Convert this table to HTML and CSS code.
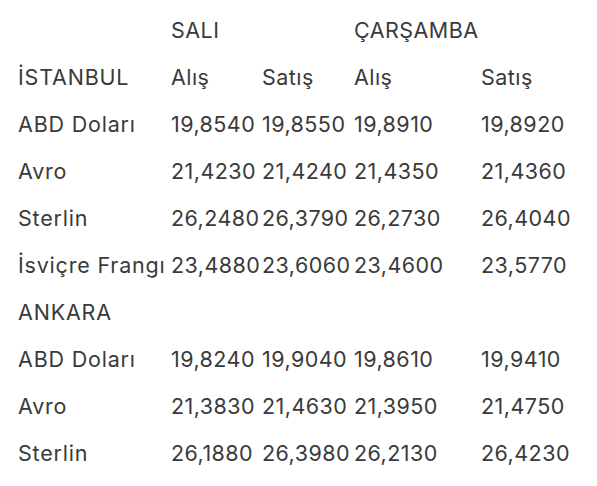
FILE: index.html
```html
<!DOCTYPE html>
<html lang="tr">
<head>
<meta charset="utf-8">
<link rel="stylesheet" href="styles.css">
</head>
<body>
<table class="rates">
  <colgroup>
    <col class="c-name"><col class="c-a"><col class="c-b"><col class="c-c"><col class="c-d">
  </colgroup>
  <tbody>
    <tr><td></td><td>SALI</td><td></td><td>ÇARŞAMBA</td><td></td></tr>
    <tr><td>İSTANBUL</td><td>Alış</td><td>Satış</td><td>Alış</td><td>Satış</td></tr>
    <tr><td>ABD Doları</td><td>19,8540</td><td>19,8550</td><td>19,8910</td><td>19,8920</td></tr>
    <tr><td>Avro</td><td>21,4230</td><td>21,4240</td><td>21,4350</td><td>21,4360</td></tr>
    <tr><td>Sterlin</td><td>26,2480</td><td>26,3790</td><td>26,2730</td><td>26,4040</td></tr>
    <tr><td>İsviçre Frangı</td><td>23,4880</td><td>23,6060</td><td>23,4600</td><td>23,5770</td></tr>
    <tr><td>ANKARA</td><td></td><td></td><td></td><td></td></tr>
    <tr><td>ABD Doları</td><td>19,8240</td><td>19,9040</td><td>19,8610</td><td>19,9410</td></tr>
    <tr><td>Avro</td><td>21,3830</td><td>21,4630</td><td>21,3950</td><td>21,4750</td></tr>
    <tr><td>Sterlin</td><td>26,1880</td><td>26,3980</td><td>26,2130</td><td>26,4230</td></tr>
  </tbody>
</table>
</body>
</html>
```
FILE: styles.css
```css
html, body {
  margin: 0;
  padding: 0;
  background: #ffffff;
}

body {
  font-family: Inter, "Noto Sans", sans-serif;
  font-size: 21.5px;
  letter-spacing: 0.45px;
  color: #3a3a3a;
}

.rates {
  margin: 7px 0 0 18px;
  border-collapse: collapse;
  table-layout: fixed;
  width: 579px;
}

.c-name { width: 153px; }
.c-a { width: 91px; }
.c-b { width: 92px; }
.c-c { width: 127px; }
.c-d { width: auto; }

.rates td {
  padding: 0;
  height: 47px;
  line-height: 47px;
  white-space: nowrap;
  vertical-align: top;
}

.rates td:first-child {
  letter-spacing: 0.8px;
}
```
